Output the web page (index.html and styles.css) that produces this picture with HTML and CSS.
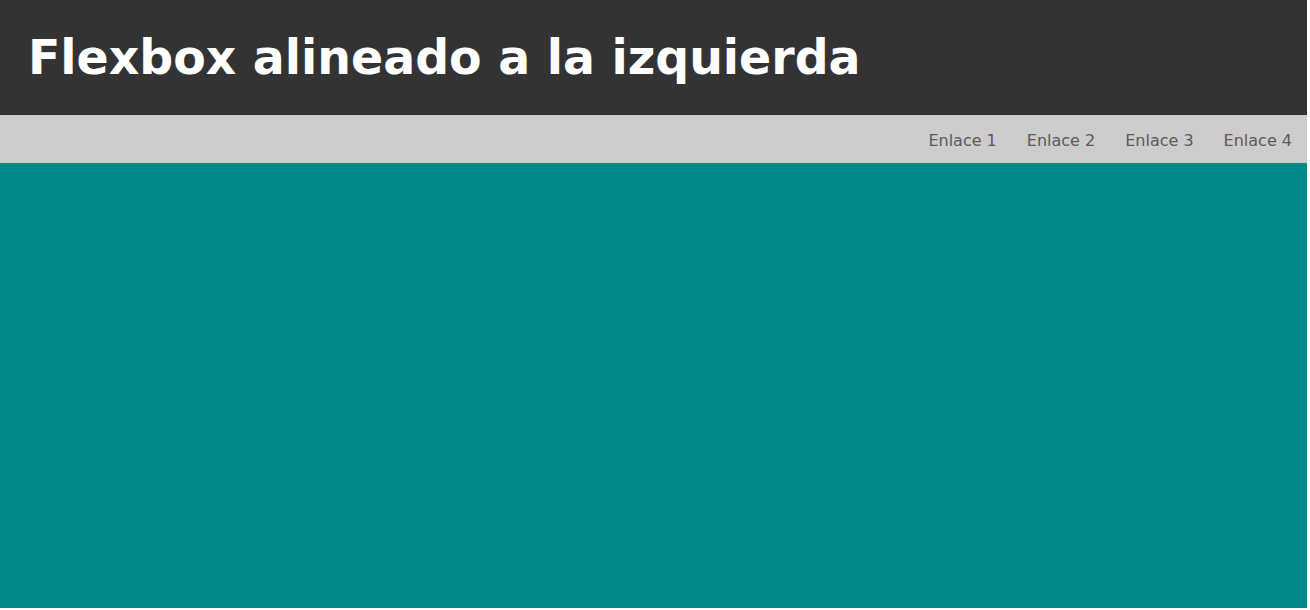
FILE: index.html
```html
<!DOCTYPE html>
<html lang="es">
<head>
<meta charset="utf-8">
<title>Flexbox alineado a la izquierda</title>
<link rel="stylesheet" href="styles.css">
</head>
<body>
<div class="page">
  <header class="top">
    <h1 class="title">Flexbox alineado a la izquierda</h1>
  </header>
  <nav class="nav">
    <a class="nav-link" href="#">Enlace 1</a>
    <a class="nav-link" href="#">Enlace 2</a>
    <a class="nav-link" href="#">Enlace 3</a>
    <a class="nav-link" href="#">Enlace 4</a>
  </nav>
  <main class="content"></main>
</div>
</body>
</html>
```
FILE: styles.css
```css
html, body {
  margin: 0;
  padding: 0;
  background: #ffffff;
}
body {
  font-family: "DejaVu Sans", Verdana, sans-serif;
}
.page {
  width: 1307px;
  height: 608px;
  display: flex;
  flex-direction: column;
}
.top {
  height: 115px;
  background: #333333;
  display: flex;
  align-items: center;
  padding: 0 28px;
  box-sizing: border-box;
}
.title {
  margin: 0;
  color: #ffffff;
  font-size: 47.4px;
  font-weight: bold;
  line-height: 1;
}
.nav {
  height: 48px;
  background: #cccccc;
  display: flex;
  justify-content: flex-end;
  align-items: center;
  padding-top: 2px;
  box-sizing: border-box;
}
.nav-link {
  color: #625858;
  text-decoration: none;
  font-size: 16px;
  padding: 0 15px;
}
.content {
  flex: 1;
  background: #008b8b;
}
```
